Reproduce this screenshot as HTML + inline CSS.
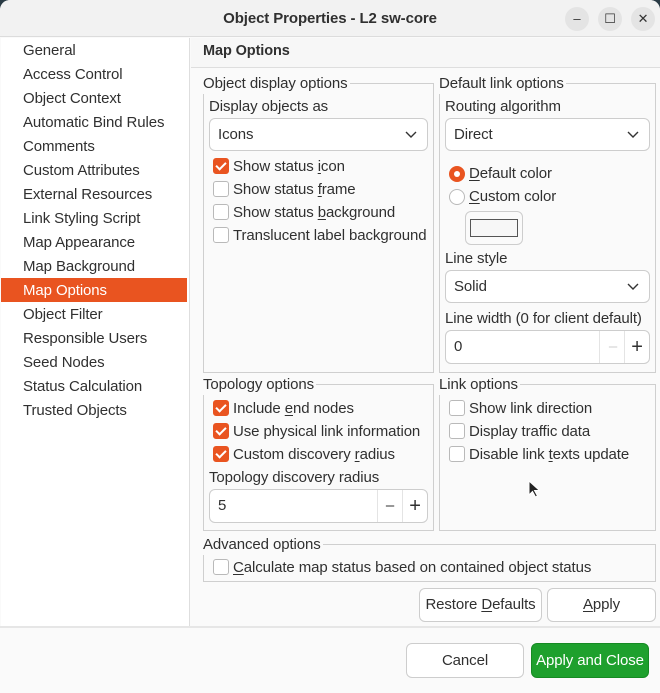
<!DOCTYPE html>
<html><head><style>
*{box-sizing:border-box;margin:0;padding:0}
body{width:660px;height:693px;background:#2a3b45;font-family:"Liberation Sans",sans-serif;font-size:15px;color:#303030;letter-spacing:-0.1px;position:relative;overflow:hidden}
.win{position:absolute;left:0;top:0;width:660px;height:693px;background:#fafafa;border-radius:10px 10px 0 0;overflow:hidden}
.a{position:absolute;white-space:nowrap;line-height:19px}
.title{left:0;top:0;width:660px;height:37px;background:#f2f2f2;border-bottom:1px solid #dcdcdc}
.tb{position:absolute;top:7px;width:24px;height:24px;border-radius:50%;background:#e4e4e4;text-align:center;line-height:24px;font-size:13px;color:#333}
.left{left:1px;top:38px;width:189px;height:588px;background:#fff;border-right:1px solid #dedede}
.li{position:absolute;left:22px;height:24px;line-height:25px}
.sel{left:0;width:186px;padding-left:22px;background:#e95420;color:#fff}
.grp{position:absolute;border:1px solid #cfcfcf}
.gt{position:absolute;left:-1px;top:-10px;background:#fafafa;padding-right:2px;line-height:20px}
.combo{position:absolute;background:#fff;border:1px solid #cdcdcd;border-radius:6px;height:33px;line-height:32px;padding-left:8px}
.combo svg{position:absolute;right:10px;top:12px}
.cb{position:absolute;width:16px;height:16px;border:1px solid #b9b9b9;border-radius:3px;background:#fff}
.cb.on{background:#e95420;border-color:#e95420}
.cb.on:after{content:"";position:absolute;left:4px;top:1px;width:4px;height:8px;border:solid #fff;border-width:0 2px 2px 0;transform:rotate(45deg)}
.btn{position:absolute;background:#fff;border:1px solid #cdcdcd;border-radius:6px;text-align:center;line-height:32px}
u{text-decoration:underline;text-underline-offset:2px}
</style></head><body>
<div class="win">
<div class="a title"></div>
<div class="a" style="left:0;width:660px;top:9px;text-align:center;font-weight:bold;font-size:15px;">Object Properties - L2 sw-core</div>
<div class="tb" style="left:565px">–</div>
<div class="tb" style="left:598px">☐</div>
<div class="tb" style="left:631px">✕</div>

<div class="a left">
<div class="li" style="top:0">General</div>
<div class="li" style="top:24px">Access Control</div>
<div class="li" style="top:48px">Object Context</div>
<div class="li" style="top:72px">Automatic Bind Rules</div>
<div class="li" style="top:96px">Comments</div>
<div class="li" style="top:120px">Custom Attributes</div>
<div class="li" style="top:144px">External Resources</div>
<div class="li" style="top:168px">Link Styling Script</div>
<div class="li" style="top:192px">Map Appearance</div>
<div class="li" style="top:216px">Map Background</div>
<div class="li sel" style="top:240px">Map Options</div>
<div class="li" style="top:264px">Object Filter</div>
<div class="li" style="top:288px">Responsible Users</div>
<div class="li" style="top:312px">Seed Nodes</div>
<div class="li" style="top:336px">Status Calculation</div>
<div class="li" style="top:360px">Trusted Objects</div>
</div>

<div class="a" style="left:191px;top:38px;width:469px;height:30px;background:#f7f7f7;border-bottom:1px solid #dedede"></div>
<div class="a" style="left:203px;top:42px;font-weight:bold;font-size:14.5px">Map Options</div>

<div class="grp" style="left:203px;top:83px;width:231px;height:290px">
<div class="gt">Object display options</div>
</div>
<div class="a" style="left:209px;top:97px">Display objects as</div>
<div class="combo" style="left:209px;top:118px;width:219px">Icons<svg width="12" height="8"><path d="M1 1l5 5 5-5" stroke="#333" stroke-width="1.4" fill="none"/></svg></div>
<div class="cb on" style="left:213px;top:158px"></div><div class="a" style="left:233px;top:157px">Show status <u>i</u>con</div>
<div class="cb" style="left:213px;top:181px"></div><div class="a" style="left:233px;top:180px">Show status <u>f</u>rame</div>
<div class="cb" style="left:213px;top:204px"></div><div class="a" style="left:233px;top:203px">Show status <u>b</u>ackground</div>
<div class="cb" style="left:213px;top:227px"></div><div class="a" style="left:233px;top:226px">Translucent label background</div>

<div class="grp" style="left:439px;top:83px;width:217px;height:290px">
<div class="gt">Default link options</div>
</div>
<div class="a" style="left:445px;top:97px">Routing algorithm</div>
<div class="combo" style="left:445px;top:118px;width:205px">Direct<svg width="12" height="8"><path d="M1 1l5 5 5-5" stroke="#333" stroke-width="1.4" fill="none"/></svg></div>
<div class="a" style="left:449px;top:166px;width:16px;height:16px;border-radius:50%;background:#e95420"><div style="position:absolute;left:5px;top:5px;width:6px;height:6px;border-radius:50%;background:#fff"></div></div>
<div class="a" style="left:469px;top:164px"><u>D</u>efault color</div>
<div class="a" style="left:449px;top:189px;width:16px;height:16px;border-radius:50%;background:#fff;border:1px solid #b9b9b9"></div>
<div class="a" style="left:469px;top:187px"><u>C</u>ustom color</div>
<div class="a" style="left:465px;top:211px;width:58px;height:34px;border:1px solid #cdcdcd;border-radius:6px;background:#fafafa"><div style="position:absolute;left:4px;top:7px;width:48px;height:18px;border:1px solid #555;background:#f7f7f7"></div></div>
<div class="a" style="left:445px;top:249px">Line style</div>
<div class="combo" style="left:445px;top:270px;width:205px">Solid<svg width="12" height="8"><path d="M1 1l5 5 5-5" stroke="#333" stroke-width="1.4" fill="none"/></svg></div>
<div class="a" style="left:445px;top:309px">Line width (0 for client default)</div>
<div class="combo" style="left:445px;top:330px;width:205px;height:34px">0
<div style="position:absolute;left:153px;top:0;width:1px;height:32px;background:#e4e4e4"></div>
<div style="position:absolute;left:178px;top:0;width:1px;height:32px;background:#e4e4e4"></div>
<div style="position:absolute;left:158px;top:0;width:18px;text-align:center;color:#ccc">–</div>
<div style="position:absolute;left:182px;top:0;width:18px;text-align:center;font-size:20px">+</div>
</div>

<div class="grp" style="left:203px;top:384px;width:231px;height:147px">
<div class="gt">Topology options</div>
</div>
<div class="cb on" style="left:213px;top:400px"></div><div class="a" style="left:233px;top:399px">Include <u>e</u>nd nodes</div>
<div class="cb on" style="left:213px;top:423px"></div><div class="a" style="left:233px;top:422px">Use physical link information</div>
<div class="cb on" style="left:213px;top:446px"></div><div class="a" style="left:233px;top:445px">Custom discovery <u>r</u>adius</div>
<div class="a" style="left:209px;top:468px">Topology discovery radius</div>
<div class="combo" style="left:209px;top:489px;width:219px;height:34px">5
<div style="position:absolute;left:167px;top:0;width:1px;height:32px;background:#e4e4e4"></div>
<div style="position:absolute;left:192px;top:0;width:1px;height:32px;background:#e4e4e4"></div>
<div style="position:absolute;left:171px;top:0;width:18px;text-align:center">–</div>
<div style="position:absolute;left:196px;top:0;width:18px;text-align:center;font-size:20px">+</div>
</div>

<div class="grp" style="left:439px;top:384px;width:217px;height:147px">
<div class="gt">Link options</div>
</div>
<div class="cb" style="left:449px;top:400px"></div><div class="a" style="left:469px;top:399px">Show link direction</div>
<div class="cb" style="left:449px;top:423px"></div><div class="a" style="left:469px;top:422px">Display traffic data</div>
<div class="cb" style="left:449px;top:446px"></div><div class="a" style="left:469px;top:445px">Disable link <u>t</u>exts update</div>
<svg class="a" style="left:528px;top:480px" width="12" height="18"><path d="M1 1v14l3.5-3.5 3 5.5 2-1-3-5.5h5z" fill="#222" stroke="#fff" stroke-width="1"/></svg>

<div class="grp" style="left:203px;top:544px;width:453px;height:38px">
<div class="gt">Advanced options</div>
</div>
<div class="cb" style="left:213px;top:559px"></div><div class="a" style="left:233px;top:558px"><u>C</u>alculate map status based on contained object status</div>

<div class="btn" style="left:419px;top:588px;width:123px;height:34px"><span>Restore <u>D</u>efaults</span></div>
<div class="btn" style="left:547px;top:588px;width:109px;height:34px"><u>A</u>pply</div>

<div class="a" style="left:0;top:626px;width:660px;height:2px;background:#e6e6e6"></div>
<div class="btn" style="left:406px;top:643px;width:118px;height:35px;line-height:34px">Cancel</div>
<div class="btn" style="left:531px;top:643px;width:118px;height:35px;line-height:34px;background:#1ea02d;border-color:#168a23;color:#fff">Apply and Close</div>
</div>
</body></html>
